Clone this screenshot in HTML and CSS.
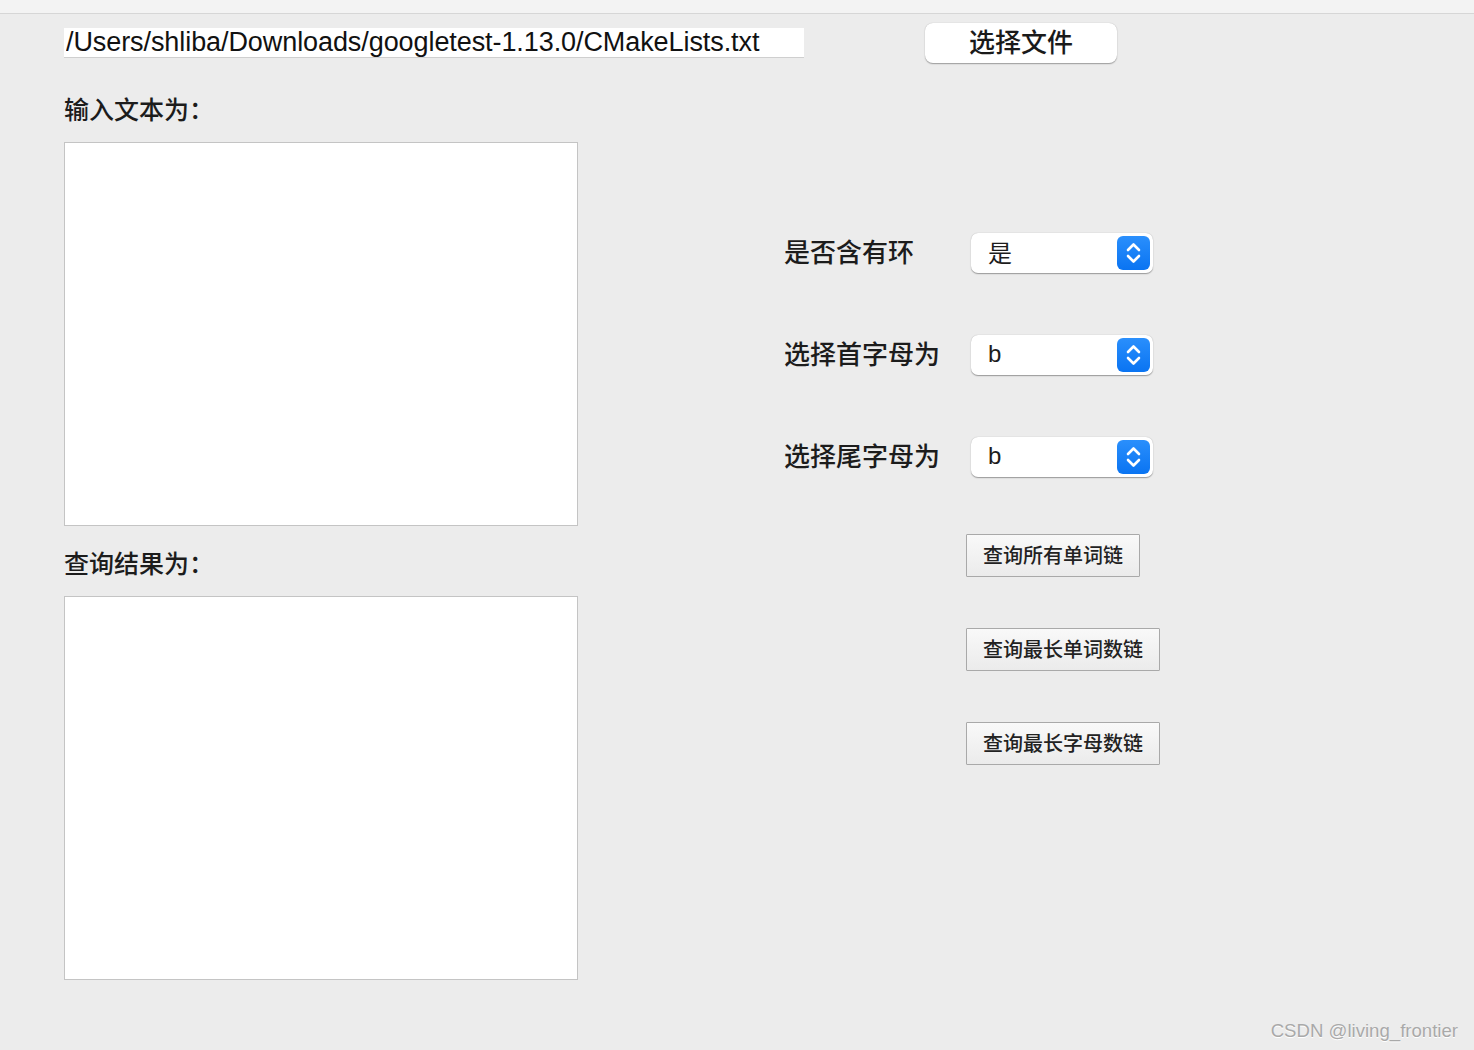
FILE: index.html
```html
<!DOCTYPE html>
<html>
<head>
  <title>单词链查询</title>
  <meta charset="UTF-8">
  <link rel="stylesheet" href="styles.css">
</head>
<body>
  <div class="topbar"></div>

  <div class="file-row">
    <input type="text" class="path-input" value="/Users/shliba/Downloads/googletest-1.13.0/CMakeLists.txt">
    <button class="choose-btn">选择文件</button>
  </div>

  <div class="main">
    <div class="left-col">
      <div class="label first">输入文本为：</div>
      <div class="text-box"></div>
      <div class="label second">查询结果为：</div>
      <div class="text-box"></div>
    </div>

    <div class="right-col">
      <div class="options">
        <div class="option-row">
          <span class="option-label">是否含有环</span>
          <div class="popup">
            <span class="popup-value">是</span>
            <span class="stepper">
              <svg width="33" height="34" viewBox="0 0 33 34">
                <path d="M11 14 L16.5 8.5 L22 14" fill="none" stroke="#fff" stroke-width="2.6" stroke-linecap="round" stroke-linejoin="round"/>
                <path d="M11 20 L16.5 25.5 L22 20" fill="none" stroke="#fff" stroke-width="2.6" stroke-linecap="round" stroke-linejoin="round"/>
              </svg>
            </span>
          </div>
        </div>
        <div class="option-row">
          <span class="option-label">选择首字母为</span>
          <div class="popup">
            <span class="popup-value">b</span>
            <span class="stepper">
              <svg width="33" height="34" viewBox="0 0 33 34">
                <path d="M11 14 L16.5 8.5 L22 14" fill="none" stroke="#fff" stroke-width="2.6" stroke-linecap="round" stroke-linejoin="round"/>
                <path d="M11 20 L16.5 25.5 L22 20" fill="none" stroke="#fff" stroke-width="2.6" stroke-linecap="round" stroke-linejoin="round"/>
              </svg>
            </span>
          </div>
        </div>
        <div class="option-row">
          <span class="option-label">选择尾字母为</span>
          <div class="popup">
            <span class="popup-value">b</span>
            <span class="stepper">
              <svg width="33" height="34" viewBox="0 0 33 34">
                <path d="M11 14 L16.5 8.5 L22 14" fill="none" stroke="#fff" stroke-width="2.6" stroke-linecap="round" stroke-linejoin="round"/>
                <path d="M11 20 L16.5 25.5 L22 20" fill="none" stroke="#fff" stroke-width="2.6" stroke-linecap="round" stroke-linejoin="round"/>
              </svg>
            </span>
          </div>
        </div>
      </div>

      <div class="actions">
        <button class="query-btn">查询所有单词链</button>
        <button class="query-btn">查询最长单词数链</button>
        <button class="query-btn">查询最长字母数链</button>
      </div>
    </div>
  </div>

  <div class="watermark">CSDN @living_frontier</div>
</body>
</html>
```

FILE: styles.css
```css
body {
  margin: 0;
  background: #ececec;
  font-family: "Noto Sans CJK SC", sans-serif;
  color: #1c1c1c;
  height: 1050px;
  overflow: hidden;
  position: relative;
}
.topbar {
  height: 13px;
  background: #f3f3f3;
  border-bottom: 1px solid #d6d6d6;
}
.file-row {
  display: flex;
  align-items: center;
  padding: 9px 0 0 64px;
}
.path-input {
  box-sizing: border-box;
  width: 740px;
  height: 30px;
  margin: 0 121px 0 0;
  padding: 0 2px;
  border: none;
  border-bottom: 1px solid #cfcfcf;
  background: #fff;
  font-family: "Liberation Sans", Arial, sans-serif;
  font-size: 27px;
  letter-spacing: -0.08px;
  color: #111;
  outline: none;
}
.choose-btn {
  width: 192px;
  height: 40px;
  border: none;
  border-radius: 8px;
  background: #fff;
  box-shadow: 0 0.5px 1px rgba(0,0,0,0.25), 0 1px 2px rgba(0,0,0,0.12);
  font-family: "Noto Sans CJK SC", sans-serif;
  font-size: 26px;
  font-weight: 500;
  line-height: 36px;
  color: #1a1a1a;
  padding: 0 0 4px;
  cursor: pointer;
}
.main {
  display: flex;
}
.left-col {
  margin-left: 64px;
  width: 514px;
}
.label {
  font-size: 25px;
  font-weight: 500;
  line-height: 30px;
  height: 30px;
}
.label.first {
  margin-top: 30px;
  margin-bottom: 19px;
}
.label.second {
  margin-top: 21px;
  margin-bottom: 19px;
}
.text-box {
  box-sizing: border-box;
  height: 384px;
  background: #fff;
  border: 1px solid #c4c4c4;
}
.right-col {
  margin-left: 206px;
  padding-top: 170px;
}
.options {
  display: flex;
  flex-direction: column;
  gap: 62px;
}
.option-row {
  display: flex;
  align-items: center;
  height: 40px;
}
.option-label {
  width: 187px;
  font-size: 26px;
  font-weight: 500;
  padding-bottom: 5px;
}
.popup {
  box-sizing: border-box;
  width: 182px;
  height: 40px;
  display: flex;
  align-items: center;
  justify-content: space-between;
  padding: 0 3px 0 17px;
  background: #fff;
  border-radius: 7px;
  box-shadow: 0 0.5px 1px rgba(0,0,0,0.28), 0 1px 2px rgba(0,0,0,0.1);
  font-family: "Liberation Sans", "Noto Sans CJK SC", sans-serif;
  font-size: 24px;
}
.popup-value {
  padding-bottom: 3px;
}
.stepper {
  width: 33px;
  height: 34px;
  border-radius: 6px;
  background: linear-gradient(#2a8ffc, #0a74f2);
  display: flex;
}
.actions {
  display: flex;
  flex-direction: column;
  align-items: flex-start;
  gap: 51px;
  margin: 57px 0 0 182px;
}
.query-btn {
  height: 43px;
  padding: 0 16px 2px;
  border: 1px solid #a9a9a9;
  border-radius: 1px;
  background: linear-gradient(#f9f9f9, #ebebeb);
  font-family: "Noto Sans CJK SC", sans-serif;
  font-size: 20px;
  font-weight: 500;
  color: #222;
  cursor: pointer;
}
.watermark {
  position: absolute;
  right: 16px;
  bottom: 8px;
  font-family: "Liberation Sans", Arial, sans-serif;
  font-size: 18.6px;
  color: #a9a9a9;
  text-shadow: 0 1px 0 #fff;
}
```
